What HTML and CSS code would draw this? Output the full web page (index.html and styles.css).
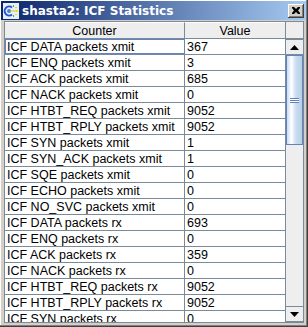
FILE: index.html
```html
<!DOCTYPE html>
<html lang="en">
<head>
  <meta charset="UTF-8">
  <title>shasta2: ICF Statistics</title>
  <link rel="stylesheet" href="styles.css">
</head>
<body>
  <div class="window">
    <div class="title-bar">
      <svg class="title-icon" width="16" height="16" viewBox="0 0 16 16">
        <rect x="0" y="0" width="16" height="16" fill="#e8eef8"/>
        <path d="M9 4.5 A4.5 4.5 0 1 0 9 11.5" fill="none" stroke="#2850c8" stroke-width="2"/>
        <circle cx="6" cy="8" r="2" fill="#4080e8"/>
        <path d="M7 8 H15" stroke="#d8c818" stroke-width="1"/>
        <rect x="10" y="2" width="1" height="2" fill="#40b040"/>
        <rect x="12" y="4" width="2" height="1" fill="#d8d820"/>
        <rect x="12" y="11" width="2" height="1" fill="#d8d820"/>
        <rect x="10" y="12" width="1" height="2" fill="#40b040"/>
        <rect x="13" y="7" width="2" height="2" fill="#e0e020"/>
      </svg>
      <span class="title-text">shasta2: ICF Statistics</span>
      <button class="close-button">
        <svg width="8" height="7" viewBox="0 0 8 7">
          <path d="M0 0h2l2 2 2-2h2v1l-2 2.5 2 2.5v1h-2l-2-2-2 2h-2v-1l2-2.5-2-2.5z" fill="#000"/>
        </svg>
      </button>
    </div>

    <div class="scroll-pane">
      <div class="table-area">
        <div class="table-header">
          <div class="header-cell counter-col">Counter</div>
          <div class="header-cell value-col">Value</div>
        </div>
        <div class="table-body">
          <div class="row"><div class="cell counter-col focused">ICF DATA packets xmit</div><div class="cell value-col">367</div></div>
          <div class="row"><div class="cell counter-col">ICF ENQ packets xmit</div><div class="cell value-col">3</div></div>
          <div class="row"><div class="cell counter-col">ICF ACK packets xmit</div><div class="cell value-col">685</div></div>
          <div class="row"><div class="cell counter-col">ICF NACK packets xmit</div><div class="cell value-col">0</div></div>
          <div class="row"><div class="cell counter-col">ICF HTBT_REQ packets xmit</div><div class="cell value-col">9052</div></div>
          <div class="row"><div class="cell counter-col">ICF HTBT_RPLY packets xmit</div><div class="cell value-col">9052</div></div>
          <div class="row"><div class="cell counter-col">ICF SYN packets xmit</div><div class="cell value-col">1</div></div>
          <div class="row"><div class="cell counter-col">ICF SYN_ACK packets xmit</div><div class="cell value-col">1</div></div>
          <div class="row"><div class="cell counter-col">ICF SQE packets xmit</div><div class="cell value-col">0</div></div>
          <div class="row"><div class="cell counter-col">ICF ECHO packets xmit</div><div class="cell value-col">0</div></div>
          <div class="row"><div class="cell counter-col">ICF NO_SVC packets xmit</div><div class="cell value-col">0</div></div>
          <div class="row"><div class="cell counter-col">ICF DATA packets rx</div><div class="cell value-col">693</div></div>
          <div class="row"><div class="cell counter-col">ICF ENQ packets rx</div><div class="cell value-col">0</div></div>
          <div class="row"><div class="cell counter-col">ICF ACK packets rx</div><div class="cell value-col">359</div></div>
          <div class="row"><div class="cell counter-col">ICF NACK packets rx</div><div class="cell value-col">0</div></div>
          <div class="row"><div class="cell counter-col">ICF HTBT_REQ packets rx</div><div class="cell value-col">9052</div></div>
          <div class="row"><div class="cell counter-col">ICF HTBT_RPLY packets rx</div><div class="cell value-col">9052</div></div>
          <div class="row"><div class="cell counter-col">ICF SYN packets rx</div><div class="cell value-col">0</div></div>
        </div>
      </div>

      <div class="scrollbar">
        <div class="scroll-corner"></div>
        <div class="scroll-button">
          <svg width="9" height="5" viewBox="0 0 9 5"><path d="M4.5 0L9 5H0z" fill="#000"/></svg>
        </div>
        <div class="scroll-track">
          <div class="scroll-thumb">
            <div class="grip"></div>
          </div>
        </div>
        <div class="scroll-button">
          <svg width="9" height="5" viewBox="0 0 9 5"><path d="M0 0H9L4.5 5z" fill="#000"/></svg>
        </div>
      </div>
    </div>
  </div>
</body>
</html>
```

FILE: styles.css
```css
html, body {
  margin: 0;
  padding: 0;
  overflow: hidden;
}

body {
  font-family: 'Liberation Sans', Arial, sans-serif;
  font-size: 12.5px;
  color: #000;
  background-color: #d4d0c8;
}

.window {
  width: 308px;
  height: 327px;
  box-sizing: border-box;
  display: flex;
  flex-direction: column;
  padding: 1px;
  background-color: #d4d0c8;
  border-right: 1px solid #404040;
  border-bottom: 1px solid #404040;
  box-shadow: inset -1px -1px 0 #808080, inset 1px 1px 0 #ffffff;
}

.title-bar {
  height: 19px;
  flex: none;
  display: flex;
  align-items: center;
  padding: 0 2px;
  background: linear-gradient(to right, #0a246a, #a6caf0);
}

.title-icon {
  flex: none;
}

.title-text {
  margin-left: 3px;
  color: #fff;
  font-family: 'DejaVu Sans', Verdana, sans-serif;
  font-weight: bold;
  font-size: 12px;
  white-space: nowrap;
}

.close-button {
  margin-left: auto;
  width: 16px;
  height: 14px;
  padding: 0;
  display: flex;
  align-items: center;
  justify-content: center;
  background-color: #d4d0c8;
  border: none;
  box-shadow: inset -1px -1px 0 #404040, inset 1px 1px 0 #ffffff, inset -2px -2px 0 #808080;
}

.scroll-pane {
  flex: 1;
  min-height: 0;
  display: flex;
  margin: 1px 2px 2px 3px;
  border: 1px solid #7a8a99;
  background-color: #fff;
}

.table-area {
  flex: 1;
  min-width: 0;
  display: flex;
  flex-direction: column;
  overflow: hidden;
}

.table-header {
  display: flex;
  height: 16px;
  flex: none;
  background-color: #eeeeee;
  border-bottom: 1px solid #7a8a99;
}

.header-cell {
  text-align: center;
  line-height: 16px;
  box-sizing: border-box;
  border-top: 1px solid #fff;
}

.counter-col {
  width: 180px;
  flex: none;
  box-sizing: border-box;
  border-right: 1px solid #7a8a99;
}

.value-col {
  flex: 1;
}

.table-body {
  flex: 1;
  overflow: hidden;
}

.row {
  display: flex;
  height: 16px;
  box-sizing: border-box;
  border-bottom: 1px solid #7a8a99;
}

.cell {
  line-height: 16px;
  padding-left: 2px;
  white-space: nowrap;
  overflow: hidden;
}

.cell.focused {
  outline: 1px solid #6382bf;
  outline-offset: -1px;
}

.scrollbar {
  width: 17px;
  flex: none;
  display: flex;
  flex-direction: column;
  background-color: #eeeeee;
  border-left: 1px solid #7a8a99;
}

.scroll-corner {
  height: 17px;
  flex: none;
  background-color: #eeeeee;
  box-sizing: border-box;
  border-bottom: 1px solid #7a8a99;
}

.scroll-button {
  height: 16px;
  flex: none;
  display: flex;
  align-items: center;
  justify-content: center;
  background-color: #eeeeee;
  box-sizing: border-box;
  border-top: 1px solid #7a8a99;
  border-bottom: 1px solid #7a8a99;
}

.scroll-track {
  flex: 1;
  display: flex;
  flex-direction: column;
  background-color: #eeeeee;
}

.scroll-thumb {
  height: 90px;
  box-sizing: border-box;
  display: flex;
  align-items: center;
  justify-content: center;
  border: 1px solid #6382bf;
  background: linear-gradient(to right, #c8ddf2, #ffffff 30%, #c8ddf2 60%, #b8cfe5);
}

.grip {
  width: 9px;
  height: 5px;
  background: repeating-linear-gradient(to bottom, #6382bf 0, #6382bf 1px, #ffffff 1px, #ffffff 2px);
}
```
